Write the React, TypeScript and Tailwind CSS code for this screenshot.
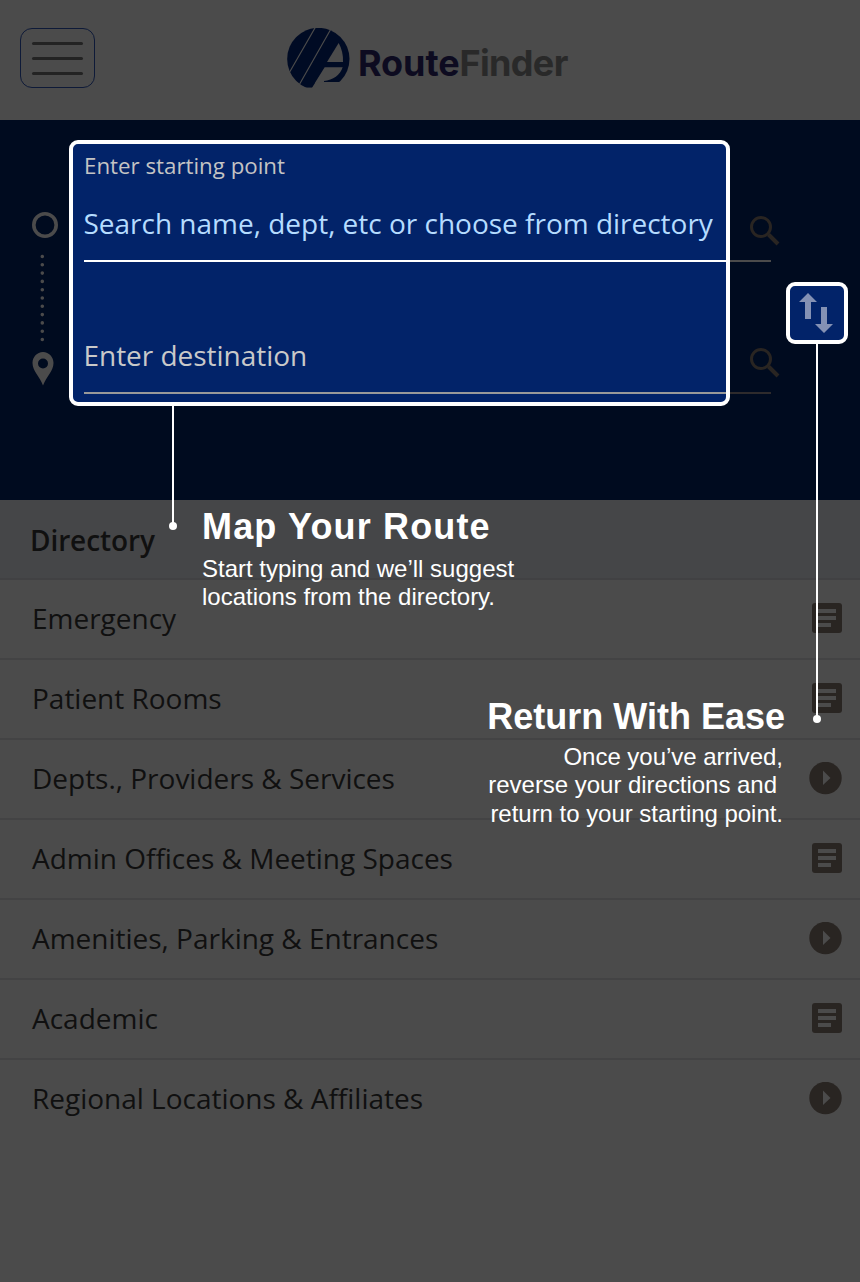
import React from "react";

type Kind = "list" | "arrow";

const items: { label: string; kind: Kind }[] = [
  { label: "Emergency", kind: "list" },
  { label: "Patient Rooms", kind: "list" },
  { label: "Depts., Providers & Services", kind: "arrow" },
  { label: "Admin Offices & Meeting Spaces", kind: "list" },
  { label: "Amenities, Parking & Entrances", kind: "arrow" },
  { label: "Academic", kind: "list" },
  { label: "Regional Locations & Affiliates", kind: "arrow" },
];

function Logo() {
  return (
    <svg className="h-[62px] w-[64px] shrink-0" viewBox="52 40 192 186">
      <defs>
        <clipPath id="disc">
          <path d="M50 30H245V202H138L127 219H50Z" />
        </clipPath>
      </defs>
      <circle cx="146" cy="133" r="93.5" fill="#000b24" clipPath="url(#disc)" />
      <path d="M137 38L60 172M182 46L90 208" stroke="#4b4b4b" strokeWidth="3.5" />
      <path d="M207 85L172 142H220C221 120 216 101 207 85Z" fill="#4b4b4b" />
      <path d="M165 158H219C212 181 190 197 163 199V204H136Z" fill="#4b4b4b" />
    </svg>
  );
}

function SearchIcon() {
  return (
    <svg className="h-[32px] w-[32px] shrink-0" viewBox="0 0 32 32" fill="none" stroke="#292522">
      <circle cx="12" cy="12" r="9.5" strokeWidth="3" />
      <path d="M19.5 19.5L29 29" strokeWidth="4" />
    </svg>
  );
}

function ItemIcon({ kind }: { kind: Kind }) {
  return kind === "list" ? (
    <svg className="h-[30px] w-[30px]" viewBox="0 0 30 30">
      <rect width="30" height="30" rx="3" fill="#292522" />
      <path d="M6 8H24M6 15H24M6 22H19" stroke="#4b4b4b" strokeWidth="4" />
    </svg>
  ) : (
    <svg className="h-[33px] w-[33px]" viewBox="0 0 33 33">
      <circle cx="16.5" cy="16" r="16.2" fill="#292522" />
      <path d="M14 8.500L21.500 16L14 23Z" fill="#4b4b4b" />
    </svg>
  );
}

export default function App() {
  return (
    <div className="relative h-[1282px] w-[860px] overflow-hidden bg-[#4b4b4b] font-['Open_Sans',sans-serif]">
      <header className="flex h-[120px] items-start">
        <button className="mt-7 ml-5 flex h-[60px] w-[75px] flex-col items-center justify-center gap-3 rounded-xl border border-[#0e1a38]">
          <span className="h-[3px] w-[51px] rounded-full bg-[#232323]" />
          <span className="h-[3px] w-[51px] rounded-full bg-[#232323]" />
          <span className="h-[3px] w-[51px] rounded-full bg-[#232323]" />
        </button>
        <div className="mt-7 ml-[192px] flex">
          <Logo />
          <span className="mt-3 ml-[7px] font-['Inter',sans-serif] text-[36px] leading-[46px] font-bold tracking-[-0.1px] whitespace-nowrap text-[#0d0b20]">
            Route<span className="tracking-[-0.65px] text-[#292929]">Finder</span>
          </span>
        </div>
      </header>

      <section className="flex h-[380px] bg-[#000b1f]">
        <svg className="mt-[90px] ml-[31px] h-[177px] w-[28px] shrink-0" viewBox="0 0 28 177">
          <circle cx="14" cy="15" r="11.2" fill="none" stroke="#4b4b4b" strokeWidth="3.6" />
          <path d="M11.3 46.5V131" stroke="#4b4b4b" strokeWidth="3.6" strokeLinecap="round" strokeDasharray="0 8.3" />
          <path fillRule="evenodd" d="M12 142C6 142 1.5 147 1.5 153C1.5 161 9 167 12 175.5C15 167 22.500 161 22.500 153C22.500 147 18 142 12 142ZM12 148.500A5 5 0 1 1 12 158.500A5 5 0 1 1 12 148.500Z" fill="#4b4b4b" />
        </svg>
        <div className="mt-[20px] ml-[10px] h-[266px] w-[661px] shrink-0 rounded-[9px] border-4 border-white bg-[#022369]">
          <div className="ml-[11px]">
            <label className="block h-[44px] pt-[6px] text-[22.3px] leading-[32px] text-[#c4c4c4]">
              Enter starting point
            </label>
            <div className="-ml-[0.5px] h-[74px] pt-[15px] text-[28px] leading-[40px] tracking-[-0.01px] whitespace-nowrap text-[#b5dcff]">
              Search name, dept, etc or choose from directory
            </div>
            <div className="-mt-[2px] h-[2px] w-[642px] bg-white" />
            <div className="-ml-[0.5px] h-[132px] w-[642.5px] border-b-2 border-[#999] pt-[73px] text-[28px] leading-[40px] tracking-[-0.03px] text-[#c9c9c9]">
              Enter destination
            </div>
          </div>
        </div>
        <div className="w-[41px] shrink-0 pt-[95px]">
          <div className="h-[47px] border-b-2 border-[#4b4b4b] pl-[19px]"><SearchIcon /></div>
          <div className="h-[132px] border-b-2 border-[#2e2b2c] pt-[85px] pl-[19px]"><SearchIcon /></div>
        </div>
        <div className="mt-[162px] ml-[15px] h-[62px] w-[62px] shrink-0 rounded-[9px] border-4 border-white bg-[#022369]">
          <svg className="h-[54px] w-[54px]" viewBox="0 0 54 54" fill="#8491b4">
            <path d="M18 7L27 16H21V33H15V16H9Z" />
            <path d="M34 47L43 38H37V21H31V38H25Z" />
          </svg>
        </div>
      </section>

      <main>
        <h2 className="flex h-[80px] items-center border-b-2 border-[#414143] bg-[#454648] pl-[30px] text-[28px] font-semibold tracking-[-0.1px] text-[#101010]">
          <span className="pt-px">Directory</span>
        </h2>
        <ul>
          {items.map((item) => (
            <li key={item.label} className="flex h-[80px] items-center justify-between border-b-2 border-[#434344] pr-[18px] pb-[2px] pl-8 text-[28px] tracking-[-0.01px] text-[#101010] last:border-transparent">
              <span>{item.label}</span>
              <ItemIcon kind={item.kind} />
            </li>
          ))}
        </ul>
      </main>

      <div className="absolute top-[406px] left-[168px] font-['Liberation_Sans',sans-serif] text-white">
        <div className="flex">
          <svg className="h-[125px] w-[10px] shrink-0" viewBox="0 0 10 125">
            <path d="M5 0V120" stroke="white" strokeWidth="2" />
            <circle cx="5" cy="120" r="4" fill="white" />
          </svg>
          <div className="pt-[100px] pl-6 whitespace-nowrap">
            <h3 className="text-[36px] leading-[42px] font-bold tracking-[1.15px]">Map Your Route</h3>
            <p className="mt-[7px] text-[24px] leading-[28px]">Start typing and we’ll suggest<br />locations from the directory.</p>
          </div>
        </div>
      </div>

      <div className="absolute top-[344px] right-[38px] font-['Liberation_Sans',sans-serif] text-white">
        <div className="flex">
          <div className="pt-[352px] pr-[27px] text-right whitespace-nowrap">
            <h3 className="text-[36px] leading-[42px] font-bold">Return With Ease</h3>
            <p className="mt-[5px] pr-[2px] text-[24px] leading-[28.4px] tracking-[-0.03px]">
              Once you’ve arrived,<br /><span className="pr-[6px]">reverse your directions and</span><br />return to your starting point.
            </p>
          </div>
          <svg className="h-[380px] w-[10px] shrink-0" viewBox="0 0 10 380">
            <path d="M5 0V375" stroke="white" strokeWidth="2" />
            <circle cx="5" cy="375" r="4" fill="white" />
          </svg>
        </div>
      </div>
    </div>
  );
}
